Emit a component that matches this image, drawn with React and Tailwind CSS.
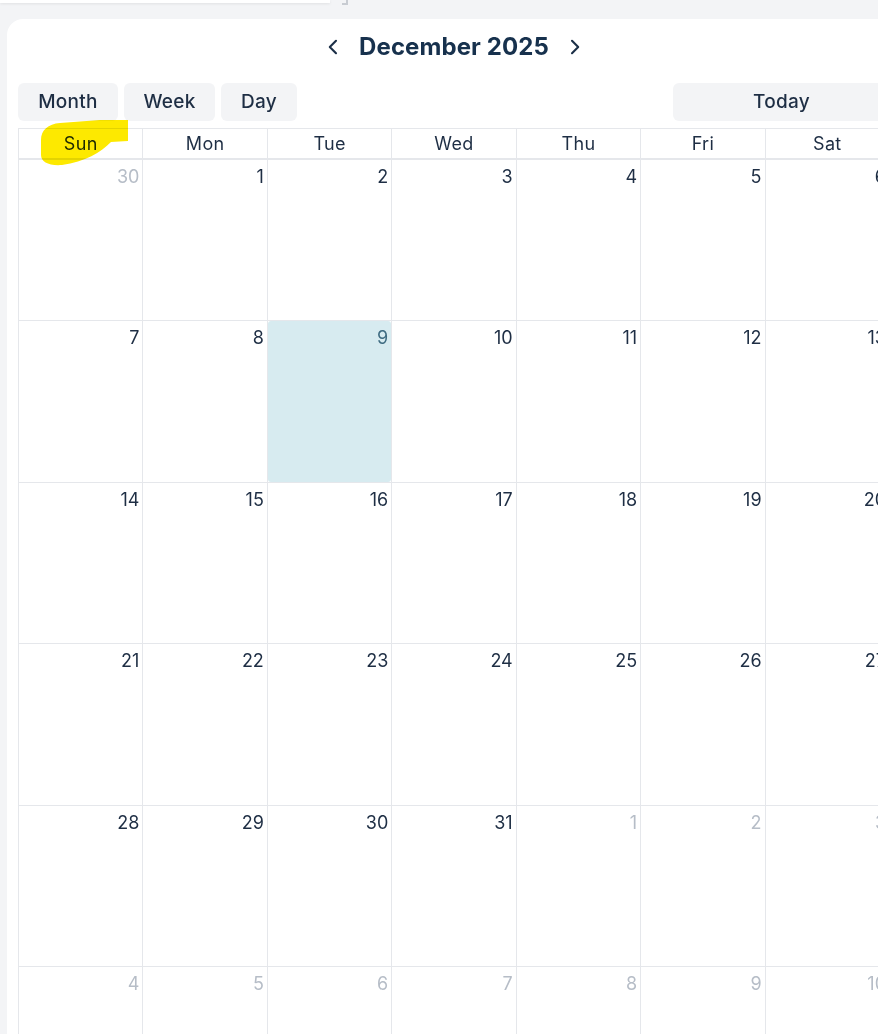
import React from "react";

const WEEKDAYS = ["Sun", "Mon", "Tue", "Wed", "Thu", "Fri", "Sat"];

// 6 weeks shown for December 2025, starting Sun Nov 30
const buildDays = () => {
  const days = [];
  const start = new Date(2025, 10, 30);
  for (let i = 0; i < 42; i++) {
    const d = new Date(start);
    d.setDate(start.getDate() + i);
    days.push({ day: d.getDate(), inMonth: d.getMonth() === 11, today: d.getMonth() === 11 && d.getDate() === 9 });
  }
  return days;
};

const ChevronLeft = () => (
  <svg width="12" height="16" viewBox="0 0 12 16" fill="none">
    <path d="M9 1.8L2.8 8L9 14.2" stroke="#1b2f47" strokeWidth="2.1" strokeLinecap="round" strokeLinejoin="round" />
  </svg>
);

const ChevronRight = () => (
  <svg width="12" height="16" viewBox="0 0 12 16" fill="none">
    <path d="M3 1.8L9.2 8L3 14.2" stroke="#1b2f47" strokeWidth="2.1" strokeLinecap="round" strokeLinejoin="round" />
  </svg>
);

export default function App() {
  const days = buildDays();

  return (
    <div className="relative min-h-screen overflow-hidden bg-[#f3f4f6] text-[#1e2e44]" style={{ fontFamily: "Inter, 'Noto Sans', sans-serif" }}>
      {/* cut-off panel above */}
      <div className="flex items-start">
        <div className="h-[3px] w-[330px] bg-white shadow-[0_1px_3px_rgba(0,0,0,0.08)]" />
        <div className="ml-[12px] h-[5px] w-[6px] border-b-2 border-r-2 border-[#c8ccd2]" />
      </div>

      <div className="ml-[7px] mt-[14px] w-[894px] rounded-tl-2xl bg-white px-[11px] pt-[12px]">
        <div className="flex h-[32px] items-center justify-center gap-[18px]">
          <button className="flex h-[32px] w-[16px] items-center justify-center">
            <ChevronLeft />
          </button>
          <h1 className="text-[24px] font-bold tracking-[0.1px] text-[#17314d]">December 2025</h1>
          <button className="flex h-[32px] w-[16px] items-center justify-center">
            <ChevronRight />
          </button>
        </div>

        <div className="mt-[20px] flex items-center justify-between">
          <div className="flex gap-[6px]">
            <button className="h-[38px] w-[100px] rounded-md bg-[#f3f4f6] text-[19px] font-medium tracking-[0.3px]">Month</button>
            <button className="h-[38px] w-[91px] rounded-md bg-[#f3f4f6] text-[19px] font-medium tracking-[0.3px]">Week</button>
            <button className="h-[38px] w-[76px] rounded-md bg-[#f3f4f6] text-[19px] font-medium tracking-[0.3px]">Day</button>
          </div>
          <button className="h-[38px] w-[217px] rounded-md bg-[#f3f4f6] text-[19px] font-medium tracking-[0.3px]">Today</button>
        </div>

        <div className="mt-[7px] grid grid-cols-7 border-l border-t border-[#e5e7eb]">
          {WEEKDAYS.map((w) => (
            <div key={w} className="flex h-[31px] items-center justify-center border-b-2 border-r border-[#e5e7eb] text-[18px] tracking-[0.3px]">
              {w}
            </div>
          ))}
          {days.map((d, i) => (
            <div key={i} className="h-[161.4px] border-b border-r border-[#e5e7eb]">
              <div
                className={`h-full rounded-[3px] pr-[3px] pt-[3px] text-right text-[18px] ${
                  d.today ? "bg-[#d7ebf0] text-[#3f6c82]" : d.inMonth ? "" : "text-[#b6bdc7]"
                }`}
              >
                {d.day}
              </div>
            </div>
          ))}
        </div>
      </div>

      {/* yellow marker scribble over "Sun" */}
      <svg className="pointer-events-none absolute left-0 top-0 mix-blend-multiply" width="140" height="175" viewBox="0 0 140 175">
        <path
          d="M128 120 L128 141 L111 142 C101 152 85 162 62 165 C49 166 41 162 41 155 L41 140 C41 130 48 124 60 123 L100 120 Z"
          fill="#fde900"
        />
      </svg>
    </div>
  );
}
